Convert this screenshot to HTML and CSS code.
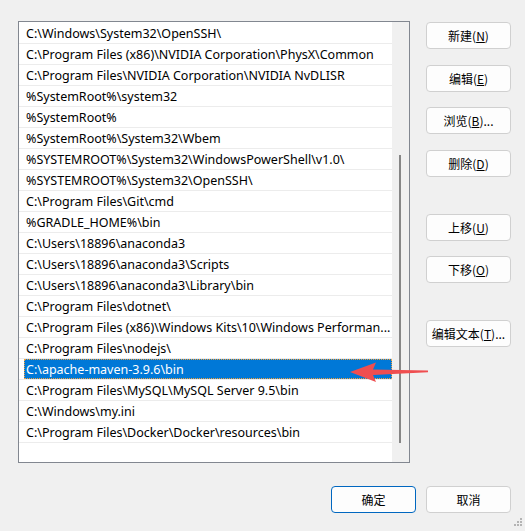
FILE: index.html
```html
<!DOCTYPE html>
<html lang="zh-CN">
<head>
<meta charset="utf-8">
<title>编辑环境变量</title>
<link rel="stylesheet" href="styles.css">
</head>
<body>
<div class="dialog">
  <div class="main">
    <div class="listbox">
      <div class="rows">
        <div class="row">C:\Windows\System32\OpenSSH\</div>
        <div class="row">C:\Program Files (x86)\NVIDIA Corporation\PhysX\Common</div>
        <div class="row">C:\Program Files\NVIDIA Corporation\NVIDIA NvDLISR</div>
        <div class="row">%SystemRoot%\system32</div>
        <div class="row">%SystemRoot%</div>
        <div class="row">%SystemRoot%\System32\Wbem</div>
        <div class="row">%SYSTEMROOT%\System32\WindowsPowerShell\v1.0\</div>
        <div class="row">%SYSTEMROOT%\System32\OpenSSH\</div>
        <div class="row">C:\Program Files\Git\cmd</div>
        <div class="row">%GRADLE_HOME%\bin</div>
        <div class="row">C:\Users\18896\anaconda3</div>
        <div class="row">C:\Users\18896\anaconda3\Scripts</div>
        <div class="row">C:\Users\18896\anaconda3\Library\bin</div>
        <div class="row">C:\Program Files\dotnet\</div>
        <div class="row">C:\Program Files (x86)\Windows Kits\10\Windows Performan...</div>
        <div class="row">C:\Program Files\nodejs\</div>
        <div class="row selected"><span class="sel">C:\apache-maven-3.9.6\bin</span></div>
        <div class="row">C:\Program Files\MySQL\MySQL Server 9.5\bin</div>
        <div class="row">C:\Windows\my.ini</div>
        <div class="row">C:\Program Files\Docker\Docker\resources\bin</div>
      </div>
      <div class="scrollbar"><div class="thumb"></div></div>
    </div>
    <div class="side">
      <div class="group g1">
        <button class="btn">新建(<u>N</u>)</button>
        <button class="btn">编辑(<u>E</u>)</button>
        <button class="btn">浏览(<u>B</u>)...</button>
        <button class="btn">删除(<u>D</u>)</button>
      </div>
      <div class="group g2">
        <button class="btn">上移(<u>U</u>)</button>
        <button class="btn">下移(<u>O</u>)</button>
      </div>
      <div class="group">
        <button class="btn">编辑文本(<u>T</u>)...</button>
      </div>
    </div>
  </div>
  <div class="footer">
    <button class="btn default">确定</button>
    <button class="btn">取消</button>
  </div>
  <svg class="arrow" width="90" height="30" viewBox="0 0 90 30">
    <path d="M5 12 L31 2.5 L28 9.6 L83 10.6 L83 12.2 L28 15 L31 22 Z" fill="#ef4e50"/>
  </svg>
  <svg class="grip" width="12" height="12" viewBox="0 0 12 12">
    <g fill="#b4b4b4">
      <rect x="9" y="1" width="2" height="2"/>
      <rect x="6" y="4" width="2" height="2"/>
      <rect x="9" y="4" width="2" height="2"/>
      <rect x="3" y="7" width="2" height="2"/>
      <rect x="6" y="7" width="2" height="2"/>
      <rect x="9" y="7" width="2" height="2"/>
    </g>
  </svg>
</div>
</body>
</html>
```
FILE: styles.css
```css
* { box-sizing: border-box; }
html, body {
  margin: 0;
  padding: 0;
  background: #f0f0f0;
}
body {
  width: 525px;
  height: 531px;
  overflow: hidden;
  font-family: "Noto Sans", "Noto Sans CJK SC", sans-serif;
  font-size: 12.5px;
  color: #000;
}
.dialog {
  position: relative;
  width: 525px;
  height: 531px;
  padding: 21px 14px 0 18px;
}
.main {
  display: flex;
  gap: 16px;
  height: 442px;
}
.listbox {
  width: 392px;
  height: 442px;
  border: 1px solid #828790;
  background: #fff;
  display: flex;
}
.rows {
  width: 373px;
  padding-top: 1px;
  display: flex;
  flex-direction: column;
}
.row {
  height: 21px;
  line-height: 21px;
  border-bottom: 1px solid #ececec;
  padding: 0 6px 0 7px;
  white-space: nowrap;
  overflow: hidden;
}
.row.selected {
  padding: 0 0 0 5px;
}
.sel {
  display: block;
  height: 20px;
  line-height: 21px;
  background: #0078d7;
  color: #fff;
  padding-left: 2px;
  outline: 1px dotted #f3a13c;
  outline-offset: -1px;
}
.scrollbar {
  width: 17px;
  background: #f0f0f0;
  position: relative;
}
.thumb {
  position: absolute;
  left: 7px;
  top: 133px;
  width: 2px;
  height: 288px;
  background: #868686;
}
.side {
  display: flex;
  flex-direction: column;
  gap: 37px;
  padding-top: 1px;
}
.group {
  display: flex;
  flex-direction: column;
  gap: 15.67px;
}
.group.g2 { gap: 15px; }
.btn {
  width: 85px;
  height: 27px;
  padding: 0;
  border: 1px solid #d0d0d0;
  border-radius: 4px;
  background: #fdfdfd;
  font-family: "Noto Sans CJK SC", "Noto Sans", sans-serif;
  font-size: 12px;
  color: #000;
  line-height: 25px;
}
.btn u { text-underline-offset: 1px; }
.btn.default {
  border-color: #0067c0;
}
.footer {
  display: flex;
  justify-content: flex-end;
  gap: 10px;
  margin-top: 23px;
}
.arrow {
  position: absolute;
  left: 345px;
  top: 360px;
}
.grip {
  position: absolute;
  right: 2px;
  bottom: 2px;
}
```
